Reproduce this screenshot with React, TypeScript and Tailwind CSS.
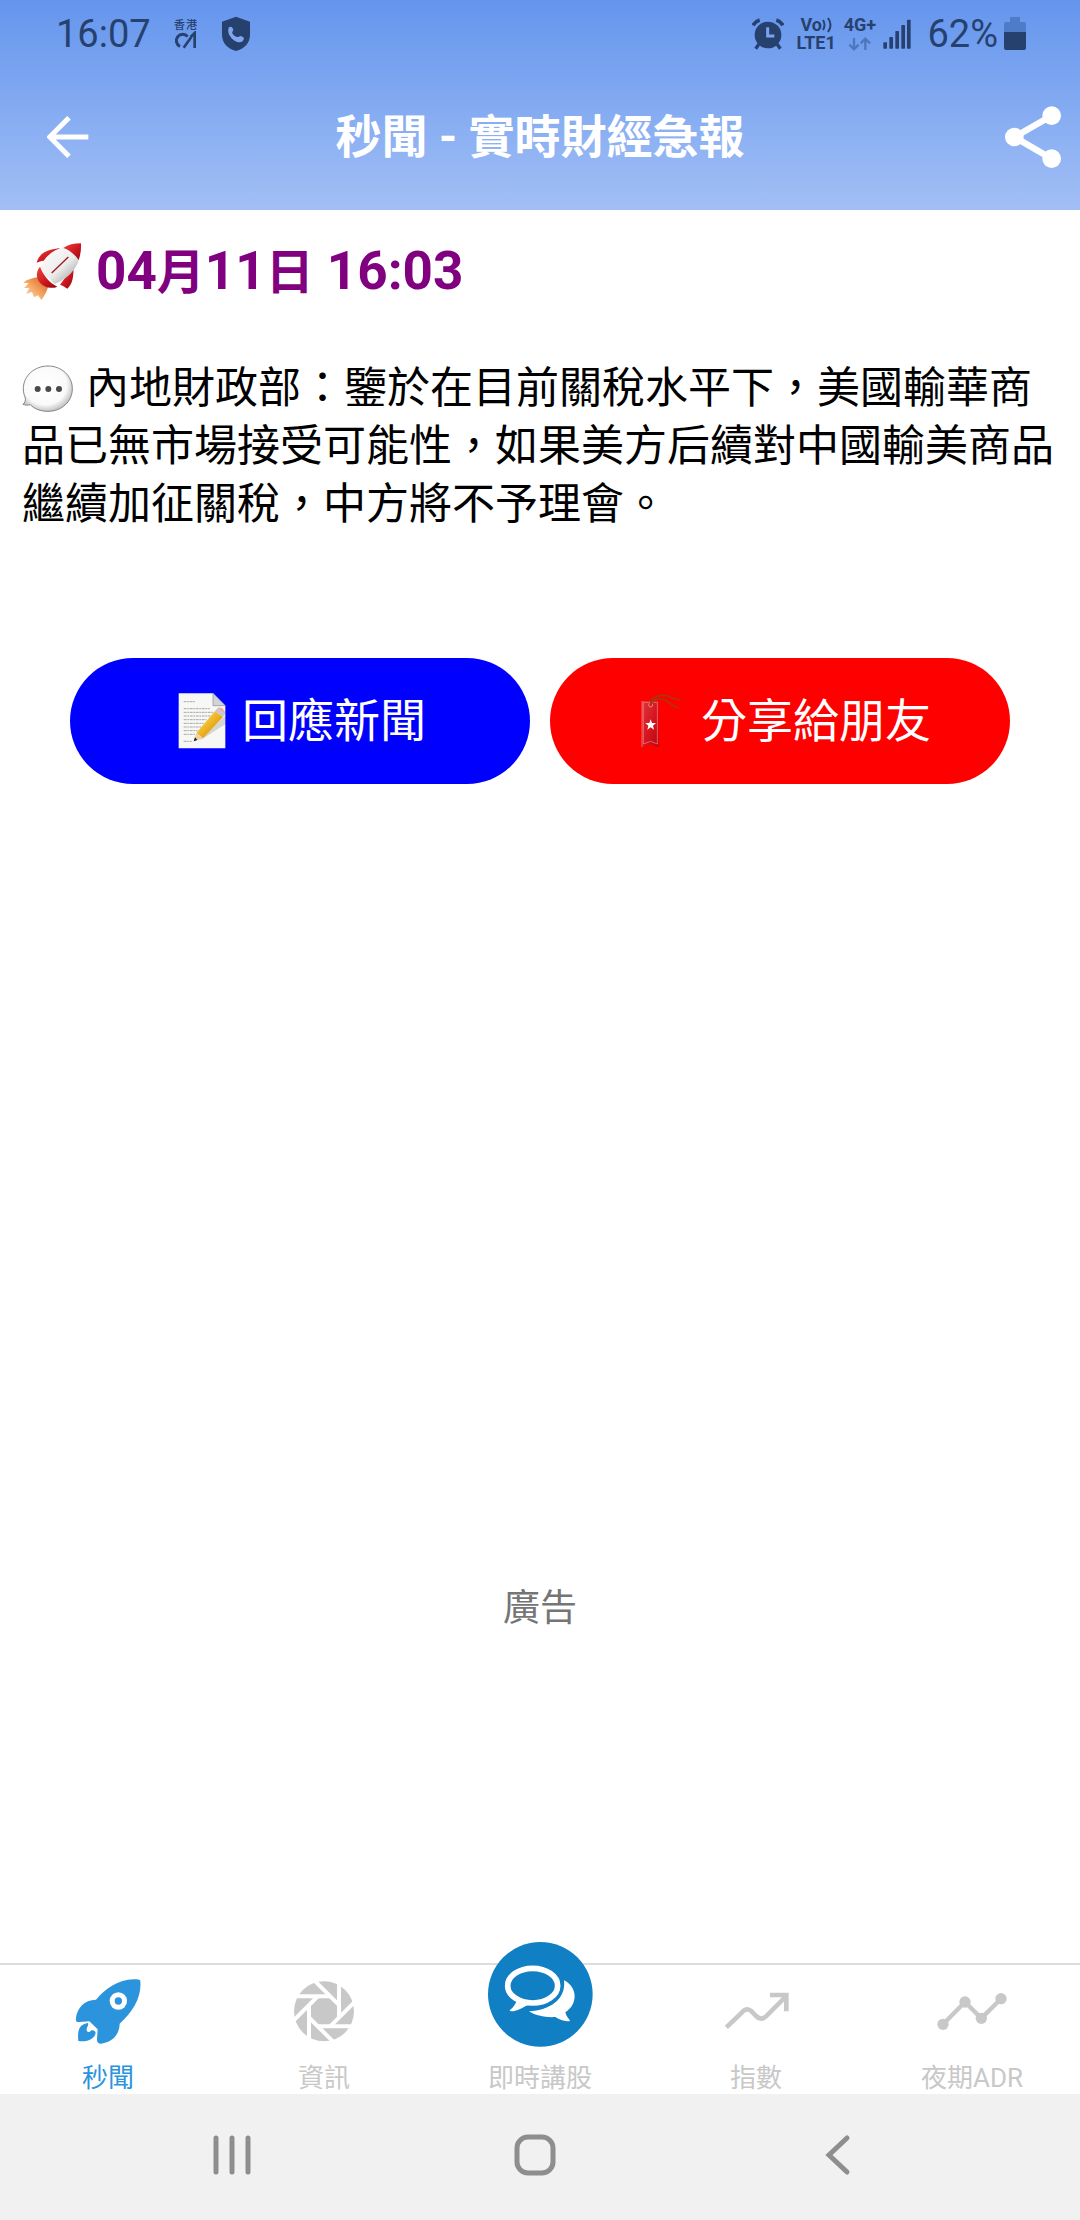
import type { ReactNode } from "react";

const FONT = "font-[Roboto,'Noto_Sans_CJK_TC',sans-serif]";

function SignalBars() {
  return (
    <svg className="w-7 h-8" viewBox="490 46 84 96" fill="currentColor">
      <rect x="491" y="119" width="11" height="19" rx="2" />
      <rect x="509" y="103" width="11" height="35" rx="2" />
      <rect x="527" y="85" width="11" height="53" rx="2" />
      <rect x="545" y="67" width="11" height="71" rx="2" />
      <rect x="562" y="51" width="11" height="87" rx="2" />
    </svg>
  );
}

function AlarmIcon() {
  return (
    <svg className="w-8 h-8" viewBox="93 46 96 96" fill="none" stroke="currentColor">
      <circle cx="141" cy="97" r="40" fill="currentColor" stroke="none" />
      <path d="M96 68 Q103 56 116 52 M186 68 Q179 56 166 52" strokeWidth="11" />
      <path d="M114 124 L104 138 M168 124 L178 138" strokeWidth="10" />
      <path d="M140 74 V100 H160" stroke="#7ba3ef" strokeWidth="9" />
    </svg>
  );
}

// "01" mark: open ring, slash and a one
function CarrierIcon() {
  return (
    <svg className="w-[23px] h-[18px]" viewBox="522 84 69 54" fill="none" stroke="currentColor" strokeWidth="9">
      <path d="M563 101 A19 19 0 1 0 540 130" />
      <path d="M551 134 L574 102" strokeWidth="8" />
      <path d="M572 102 L584 90 V135" strokeWidth="8" />
    </svg>
  );
}

function StatusBar() {
  return (
    <div className="flex items-center justify-between h-16 pl-14 pr-[54px] pt-1 text-[#27416f]">
      <div className="flex items-center">
        <span className="text-[38px] leading-none w-[96px]">16:07</span>
        <div className="flex flex-col items-center ml-[22px]">
          <span className="flex gap-px text-[11px] leading-[11px] font-medium">
            <span>香</span>
            <span>港</span>
          </span>
          <CarrierIcon />
        </div>
        <svg className="w-[30px] h-9 ml-6" viewBox="664 42 90 108">
          <path d="M709 44 L751 59 V98 C751 124 734 139 709 147 C684 139 667 124 667 98 V59 Z" fill="currentColor" />
          <path d="M687 77 C692 71 698 74 701 83 C699 89 696 91 699 96 C705 103 711 107 718 104 C722 100 727 103 733 108 C732 121 719 125 706 117 C692 108 682 92 687 77 Z" fill="#7fa6ef" />
        </svg>
      </div>
      <div className="flex items-center">
        <AlarmIcon />
        <div className="flex flex-col ml-3 w-[40px] text-[18px] leading-[18px] font-bold">
          <span className="flex items-center pl-1">
            Vo
            <svg className="w-3 h-4" viewBox="0 0 12 16" fill="none" stroke="currentColor" strokeWidth="2">
              <path d="M1 3 Q4 8 1 13 M6 1 Q11 8 6 15" />
            </svg>
          </span>
          <span>LTE1</span>
        </div>
        <div className="flex flex-col items-center ml-2 w-[31px] text-[18px] leading-[18px] font-bold">
          <span>4G+</span>
          <svg className="w-[23px] h-[18px] text-[#4e77bb]" viewBox="378 94 69 54" fill="none" stroke="currentColor" strokeWidth="7">
            <path d="M396 106 V140 M382 126 L396 140 L410 126 M430 142 V108 M416 122 L430 108 L444 122" />
          </svg>
        </div>
        <div className="ml-2">
          <SignalBars />
        </div>
        <span className="text-[38px] leading-none ml-4">62%</span>
        <svg className="w-[22px] h-[34px] ml-[6px]" viewBox="0 0 22 34">
          <path d="M6 0 H16 V5 H20 Q22 5 22 7 V15 H0 V7 Q0 5 2 5 H6 Z" fill="#4e7cc9" />
          <path d="M0 15 H22 V31 Q22 33 20 33 H2 Q0 33 0 31 Z" fill="currentColor" />
        </svg>
      </div>
    </div>
  );
}

function Header() {
  return (
    <header className="bg-linear-to-b from-[#6495ed] to-[#a2bff5] text-white">
      <StatusBar />
      <div className="grid grid-cols-[1fr_auto_1fr] items-center h-[146px] px-[19px]">
        <button type="button" aria-label="返回" className="justify-self-start pl-7">
          <svg className="w-[42px] h-[42px]" viewBox="146 346 126 126" fill="none" stroke="currentColor" strokeWidth="15">
            <path d="M270 409 H156 M212 351 L154 409 L212 467" />
          </svg>
        </button>
        <h1 className="text-[46px] leading-[60px] font-bold">秒聞 - 實時財經急報</h1>
        <button type="button" aria-label="分享" className="justify-self-end">
          <svg className="w-14 h-[62px]" viewBox="855 317 168 186" fill="currentColor">
            <path d="M995 346 L883 410 L995 475" fill="none" stroke="currentColor" strokeWidth="19" />
            <circle cx="883" cy="410" r="28" />
            <circle cx="995" cy="346" r="28" />
            <circle cx="995" cy="475" r="28" />
          </svg>
        </button>
      </div>
    </header>
  );
}

function RocketEmoji() {
  return (
    <svg className="w-[60px] h-[60px]" viewBox="70 62 180 180">
      <defs>
        <linearGradient id="hull" x1="0" y1="0" x2="1" y2="1">
          <stop offset="0%" stopColor="#ffffff" />
          <stop offset="55%" stopColor="#ececec" />
          <stop offset="100%" stopColor="#8f8f8f" />
        </linearGradient>
        <linearGradient id="fin" x1="0" y1="0" x2="1" y2="1">
          <stop offset="0%" stopColor="#ee4438" />
          <stop offset="60%" stopColor="#c8141c" />
          <stop offset="100%" stopColor="#8c0a10" />
        </linearGradient>
        <linearGradient id="flame" x1="1" y1="0" x2="0" y2="1">
          <stop offset="0%" stopColor="#c9602a" />
          <stop offset="50%" stopColor="#f5a35e" />
          <stop offset="100%" stopColor="#fde8d0" />
        </linearGradient>
      </defs>
      <path d="M114 168 C98 172 82 176 74 184 L90 186 L76 200 L92 200 L82 218 L100 212 L106 228 L118 222 L128 236 C136 226 144 212 148 198 Z" fill="url(#flame)" />
      <path d="M184 80 C156 84 122 90 114 124 C128 118 142 116 152 118 Z" fill="url(#fin)" />
      <path d="M224 136 C226 166 220 190 206 202 C200 198 192 192 184 190 Z" fill="url(#fin)" />
      <path d="M196 78 C164 84 134 108 122 144 L168 188 C206 172 232 146 242 112 Z" fill="url(#hull)" />
      <path d="M247 66 C226 66 208 70 194 80 C208 84 228 98 240 116 C246 100 248 82 247 66 Z" fill="url(#fin)" />
      <path d="M124 136 C112 150 112 168 122 182 C134 198 158 204 176 196 C152 184 134 162 124 136 Z" fill="url(#fin)" />
      <path d="M209 107 L159 155" stroke="#a01820" strokeWidth="4" />
    </svg>
  );
}

function BubbleEmoji() {
  return (
    <svg className="inline-block w-[52px] h-12 mr-3 align-[-10px]" viewBox="66 430 156 144">
      <defs>
        <radialGradient id="bubble" cx="45%" cy="42%" r="58%">
          <stop offset="0%" stopColor="#ffffff" />
          <stop offset="75%" stopColor="#fafafa" />
          <stop offset="100%" stopColor="#c4c4c4" />
        </radialGradient>
      </defs>
      <path
        d="M144 433 C184 433 217 462 217 501 C217 541 184 569 144 569 C122 569 103 562 91 549 C84 551 76 551 69 548 C75 543 77 537 76 529 C72 520 70 511 70 501 C70 462 104 433 144 433 Z"
        fill="url(#bubble)"
        stroke="#858585"
        strokeWidth="3"
      />
      <g fill="#4a4a4a">
        <circle cx="113" cy="502" r="9" />
        <circle cx="145" cy="502" r="9" />
        <circle cx="177" cy="502" r="9" />
      </g>
    </svg>
  );
}

function MemoEmoji() {
  return (
    <svg className="w-12 h-14" viewBox="355 168 144 168">
      <defs>
        <linearGradient id="pencil" x1="0" y1="0" x2="1" y2="1">
          <stop offset="0%" stopColor="#ffe27a" />
          <stop offset="50%" stopColor="#eeb422" />
          <stop offset="100%" stopColor="#b97a0c" />
        </linearGradient>
      </defs>
      <path d="M357 169 H460 L497 206 V334 H357 Z" fill="#f7f7f5" />
      <path d="M460 169 L497 206 H460 Z" fill="#cfd3da" stroke="#8c8c98" strokeWidth="2" />
      <g stroke="#a8a8a8" strokeWidth="3" strokeDasharray="9 2 5 2">
        <path d="M372 194 H406 M372 215 H450 M372 226 H462 M372 237 H452 M372 248 H440 M372 259 H432 M372 270 H424 M372 281 H414 M372 292 H408 M372 313 H396" />
      </g>
      <path d="M497 236 L418 312 L497 262 Z" fill="#000" opacity="0.14" />
      <path d="M466 222 L490 240 L430 304 L410 288 Z" fill="url(#pencil)" />
      <path d="M410 288 L430 304 L402 313 Z" fill="#f0cfa0" />
      <path d="M406 301 L413 309 L402 313 Z" fill="#1c1c1c" />
      <path d="M466 222 L472 215 L496 232 L490 240 Z" fill="#c5c9ce" />
      <path d="M472 215 C480 206 498 216 496 232 Z" fill="#e9b0a4" />
    </svg>
  );
}

function BookmarkEmoji() {
  return (
    <svg className="w-14 h-14" viewBox="265 168 168 168">
      <defs>
        <linearGradient id="ribbon" x1="0" y1="0" x2="1" y2="1">
          <stop offset="0%" stopColor="#e0343c" />
          <stop offset="60%" stopColor="#d3121c" />
          <stop offset="100%" stopColor="#b00810" />
        </linearGradient>
      </defs>
      <path d="M304 192 H354 V330 L330 322 L304 330 Z" fill="url(#ribbon)" />
      <path d="M308 196 H350 V321 L330 313 L308 321 Z" fill="none" stroke="#f0888c" strokeWidth="2" />
      <path d="M304 192 V330" stroke="#ef9a94" strokeWidth="2" />
      <circle cx="330" cy="204" r="6" fill="#e0201c" stroke="#f5b0a8" strokeWidth="2" />
      <path d="M330 206 C326 184 350 172 376 176 C392 180 402 188 418 189 M332 202 C338 184 366 180 384 196 C394 204 404 212 416 213" fill="none" stroke="#a8380c" strokeWidth="5" />
      <path d="M330 247 L334 258 L346 258 L337 266 L340 278 L330 271 L320 278 L323 266 L314 258 L326 258 Z" fill="#fff" />
    </svg>
  );
}

function Article() {
  return (
    <article className="px-[22px] pt-7">
      <h2 className="flex items-center gap-[14px] text-[53px] leading-[66px] font-bold text-[#800080]">
        <RocketEmoji />
        <span>
          04<span className="text-[48px]">月</span>11<span className="text-[48px]">日</span> 16:03
        </span>
      </h2>
      <p className="mt-[53px] text-[43px] leading-[58px] text-black">
        <BubbleEmoji />
        內地財政部：鑒於在目前關稅水平下，美國輸華商品已無市場接受可能性，如果美方后續對中國輸美商品繼續加征關稅，中方將不予理會。
      </p>
    </article>
  );
}

function Actions() {
  return (
    <div className="grid grid-cols-2 gap-5 px-[70px] mt-[125px] text-[46px] leading-[60px] text-white">
      <button type="button" className="flex items-center justify-center gap-4 h-[126px] pl-1 rounded-full bg-[#0000ff]">
        <MemoEmoji />
        回應新聞
      </button>
      <button type="button" className="flex items-center justify-center gap-4 h-[126px] rounded-full bg-[#ff0000]">
        <BookmarkEmoji />
        分享給朋友
      </button>
    </div>
  );
}

interface TabProps {
  label: string;
  active?: boolean;
  raised?: boolean;
  children: ReactNode;
}

function Tab({ label, active, raised, children }: TabProps) {
  return (
    <a
      href="#"
      aria-current={active ? "page" : undefined}
      className={`flex flex-col items-center justify-end pb-px ${raised ? "-mt-7" : "pt-3"} ${
        active ? "text-[#2b94dc]" : "text-[#c8c8c8]"
      }`}
    >
      {children}
      <span className="mt-4 text-[26px] leading-[30px]">{label}</span>
    </a>
  );
}

const BLADES = [0, 45, 90, 135, 180, 225, 270, 315];

function TabBar() {
  return (
    <nav className="grid grid-cols-5 border-t-2 border-[#dcdcdc] bg-white">
      <Tab label="秒聞" active>
        <svg className="w-[70px] h-[70px]" viewBox="219 140 210 210" fill="currentColor">
          <path d="M418 148 C364 140 318 172 288 208 C252 208 232 234 228 262 C226 272 230 276 238 275 L268 273 L293 297 L291 326 C290 338 298 342 310 339 C340 332 358 312 359 280 C400 244 425 200 421 153 Q421 149 418 148 Z" />
          <path d="M235 332 C232 302 236 284 262 278 C270 282 258 292 260 300 C262 308 270 306 274 300 C280 298 287 302 287 308 C284 326 262 336 235 332 Z" />
          <circle cx="355" cy="212" r="26" fill="#fff" />
          <circle cx="355" cy="212" r="11" />
        </svg>
      </Tab>
      <Tab label="資訊">
        <svg className="w-[70px] h-[70px]" viewBox="-105 -103 210 210">
          <circle r="90" fill="currentColor" />
          {BLADES.map((deg) => (
            <path key={deg} d="M20 -45 H-95" stroke="#fff" strokeWidth="12" transform={`rotate(${deg})`} />
          ))}
        </svg>
      </Tab>
      <Tab label="即時講股" raised>
        <svg className="w-[105px] h-[105px]" viewBox="265 57 315 315">
          <circle cx="422" cy="214" r="157" fill="#117fc3" />
          <ellipse cx="399" cy="188" rx="75" ry="52" fill="none" stroke="#fff" strokeWidth="17" />
          <path d="M352 230 C348 244 340 254 330 262 C332 268 350 266 384 246 Z" fill="#fff" />
          <path d="M493 172 C534 192 536 244 497 268 C500 280 506 286 511 293 C508 298 486 294 467 282 C440 284 405 278 388 265 C450 262 500 230 493 172 Z" fill="#fff" />
        </svg>
      </Tab>
      <Tab label="指數">
        <svg className="w-[70px] h-[70px]" viewBox="123 140 210 210" fill="none" stroke="currentColor" strokeWidth="14">
          <path d="M139 291 L186 246 Q200 230 215 243 L228 257 Q243 272 258 258 L318 198" />
          <path d="M270 194 H319 V243" />
        </svg>
      </Tab>
      <Tab label="夜期ADR">
        <svg className="w-[70px] h-[70px]" viewBox="771 140 210 210" fill="currentColor">
          <path d="M789 282 L855 215 L904 264 L963 205" fill="none" stroke="currentColor" strokeWidth="13" />
          <circle cx="789" cy="282" r="17" />
          <circle cx="855" cy="215" r="17" />
          <circle cx="904" cy="264" r="17" />
          <circle cx="963" cy="205" r="17" />
        </svg>
      </Tab>
    </nav>
  );
}

function SystemNav() {
  return (
    <div className="grid grid-cols-3 items-center justify-items-center h-[126px] pl-20 pr-[90px] pb-1 bg-[#f1f1f1] text-[#8e8e8e]">
      <button type="button" aria-label="最近">
        <svg className="w-[42px] h-[42px]" viewBox="0 0 42 42" fill="none" stroke="currentColor" strokeWidth="5" strokeLinecap="round">
          <path d="M5 4 V38 M21 4 V38 M37 4 V38" />
        </svg>
      </button>
      <button type="button" aria-label="主頁">
        <svg className="w-[42px] h-[42px]" viewBox="0 0 42 42" fill="none" stroke="currentColor" strokeWidth="5">
          <rect x="3" y="3" width="36" height="36" rx="11" />
        </svg>
      </button>
      <button type="button" aria-label="上一頁">
        <svg className="w-[42px] h-[42px]" viewBox="0 0 42 42" fill="none" stroke="currentColor" strokeWidth="5" strokeLinecap="round">
          <path d="M30 4 L12 21 L30 38" />
        </svg>
      </button>
    </div>
  );
}

export default function App() {
  return (
    <div lang="zh-Hant" className={`flex flex-col min-h-screen bg-white ${FONT}`}>
      <Header />
      <main className="flex flex-col flex-1">
        <Article />
        <Actions />
        <aside className="mt-auto min-h-[378px] text-center text-[37px] leading-[48px] text-[#757575]">廣告</aside>
      </main>
      <footer>
        <TabBar />
        <SystemNav />
      </footer>
    </div>
  );
}
